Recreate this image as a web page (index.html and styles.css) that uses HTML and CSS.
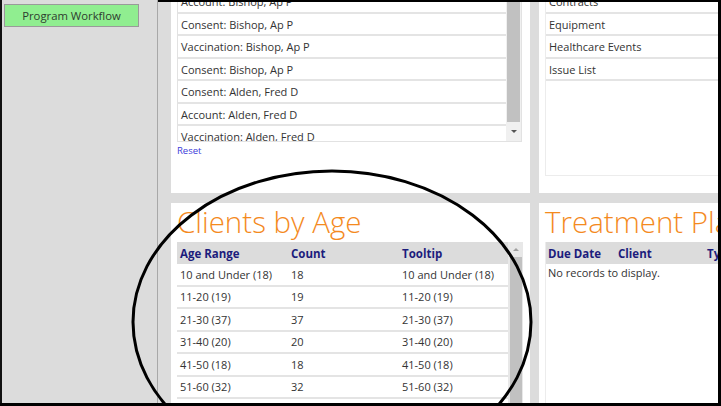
FILE: index.html
```html
<!DOCTYPE html>
<html lang="en">
<head>
<meta charset="utf-8">
<title>Dashboard</title>
<link rel="stylesheet" href="styles.css">
</head>
<body>
<div class="screen">
  <aside class="sidebar">
    <button class="btn-workflow" type="button">Program Workflow</button>
  </aside>
  <main class="main">
    <div class="dash">
      <section class="panel panel-recent">
        <div class="listbox">
          <ul class="rows">
            <li>Account: Bishop, Ap P</li>
            <li>Consent: Bishop, Ap P</li>
            <li>Vaccination: Bishop, Ap P</li>
            <li>Consent: Bishop, Ap P</li>
            <li>Consent: Alden, Fred D</li>
            <li>Account: Alden, Fred D</li>
            <li>Vaccination: Alden, Fred D</li>
          </ul>
          <div class="vscroll">
            <div class="vscroll-thumb"></div>
            <div class="vscroll-btn"><span class="tri-down"></span></div>
          </div>
        </div>
        <a class="reset" href="#">Reset</a>
      </section>

      <section class="panel panel-links">
        <ul class="rows linkbox">
          <li>Contracts</li>
          <li>Equipment</li>
          <li>Healthcare Events</li>
          <li>Issue List</li>
        </ul>
      </section>

      <section class="panel panel-age">
        <h2 class="panel-title">Clients by Age</h2>
        <div class="gridbox">
          <div class="grid-main">
            <div class="grid-head">
              <span class="c1">Age Range</span>
              <span class="c2">Count</span>
              <span class="c3">Tooltip</span>
            </div>
            <div class="grid-row"><span class="c1">10 and Under (18)</span><span class="c2">18</span><span class="c3">10 and Under (18)</span></div>
            <div class="grid-row"><span class="c1">11-20 (19)</span><span class="c2">19</span><span class="c3">11-20 (19)</span></div>
            <div class="grid-row"><span class="c1">21-30 (37)</span><span class="c2">37</span><span class="c3">21-30 (37)</span></div>
            <div class="grid-row"><span class="c1">31-40 (20)</span><span class="c2">20</span><span class="c3">31-40 (20)</span></div>
            <div class="grid-row"><span class="c1">41-50 (18)</span><span class="c2">18</span><span class="c3">41-50 (18)</span></div>
            <div class="grid-row"><span class="c1">51-60 (32)</span><span class="c2">32</span><span class="c3">51-60 (32)</span></div>
            <div class="grid-row"><span class="c1">61-70 (25)</span><span class="c2">25</span><span class="c3">61-70 (25)</span></div>
          </div>
          <div class="gscroll">
            <div class="gscroll-btn"><span class="tri-up"></span></div>
            <div class="gscroll-thumb"></div>
          </div>
        </div>
      </section>

      <section class="panel panel-plans">
        <h2 class="panel-title">Treatment Plans</h2>
        <div class="planbox">
          <div class="grid-head plan-head">
            <span class="p1">Due Date</span>
            <span class="p2">Client</span>
            <span class="p3">Type</span>
          </div>
          <div class="empty">No records to display.</div>
        </div>
      </section>
    </div>
  </main>
  <svg class="annotation" width="721" height="406" viewBox="0 0 721 406" aria-hidden="true">
    <ellipse cx="332" cy="322" rx="199" ry="151" fill="none" stroke="#000" stroke-width="3"/>
  </svg>
</div>
</body>
</html>
```

FILE: styles.css
```css
* { box-sizing: border-box; }
html, body { margin: 0; padding: 0; background: #fff; }
body { font-family: "Open Sans", "Noto Sans", sans-serif; color: #333; }

.screen {
  position: relative;
  width: 721px;
  height: 406px;
  display: flex;
  overflow: hidden;
  border-right: 3px solid #000;
  border-bottom: 3px solid #000;
  background: #dcdcdc;
}

.sidebar {
  width: 158px;
  flex: none;
  background: #dcdcdc;
  border-left: 2px solid #111;
  border-right: 1px solid #a8a8a8;
  padding: 4px 0 0 2px;
}

.btn-workflow {
  display: block;
  width: 135px;
  height: 23px;
  margin: 0;
  padding: 0;
  background: #90ee90;
  border: 1px solid #9a9a9a;
  color: #2f3b2f;
  font-family: "Open Sans", "Noto Sans", sans-serif;
  font-size: 11.3px;
  line-height: 21px;
  text-align: center;
}

.main {
  flex: 1;
  min-width: 0;
  border-top: 2px solid #000;
  padding-left: 13px;
  overflow: hidden;
  background: #dcdcdc;
}

.dash {
  margin-top: -11px;
  display: grid;
  grid-template-columns: 359px 1fr;
  grid-template-rows: 202px 260px;
  column-gap: 9px;
  row-gap: 10px;
  width: 600px;
}

.panel {
  background: #fff;
  min-width: 0;
  overflow: hidden;
}

.rows {
  list-style: none;
  margin: 0;
  padding: 0;
}
.rows li {
  height: 22.5px;
  padding-top: 2px;
  line-height: 18.5px;
  border-bottom: 2px solid #e4e4e4;
  padding-left: 3px;
  font-size: 11px;
  color: #333;
  white-space: nowrap;
}

/* recent activity list */
.panel-recent { padding: 0 8px 0 6px; }
.listbox {
  height: 151px;
  display: flex;
  border: 1px solid #e2e2e2;
  border-top: 0;
  overflow: hidden;
}
.listbox .rows { flex: 1; min-width: 0; }
.vscroll {
  width: 15px;
  flex: none;
  background: #f0f0f0;
  display: flex;
  flex-direction: column;
  padding: 0 1px 0 1px;
}
.vscroll-thumb { height: 131px; background: #c1c1c1; }
.vscroll-btn {
  flex: 1;
  display: flex;
  align-items: center;
  justify-content: center;
}
.tri-down {
  width: 0; height: 0;
  border-left: 3px solid transparent;
  border-right: 3px solid transparent;
  border-top: 3px solid #555;
}
.reset {
  display: block;
  margin-top: 3px;
  font-size: 9.5px;
  line-height: 12px;
  color: #3b3bd9;
  text-decoration: none;
}

/* links list */
.panel-links { padding-left: 6px; }
.linkbox {
  height: 185px;
  border-left: 1px solid #ececec;
  border-bottom: 1px solid #ececec;
}

/* titles */
.panel-title {
  margin: 0;
  height: 39px;
  padding: 1px 0 0 0;
  font-family: "Open Sans", "Noto Sans", sans-serif;
  font-weight: 300;
  font-size: 29.5px;
  line-height: 36px;
  color: #f48a1e;
  white-space: nowrap;
}

/* clients by age grid */
.panel-age { padding: 0 7px 0 6px; }
.gridbox { display: flex; height: 221px; }
.grid-main { flex: 1; min-width: 0; }
.grid-head {
  display: flex;
  height: 22px;
  background: #dcdcdc;
  align-items: center;
  font-size: 11.5px;
  font-weight: 700;
  color: #1c1c7c;
  white-space: nowrap;
}
.grid-row {
  display: flex;
  height: 22.5px;
  align-items: center;
  border-bottom: 2px solid #e4e4e4;
  font-size: 11px;
  color: #333;
  white-space: nowrap;
}
.c1, .c2 { width: 111px; padding-left: 3px; flex: none; }
.c3 { flex: 1; padding-left: 3px; }
.gscroll {
  width: 15px;
  flex: none;
  background: #e8e8e8;
  display: flex;
  flex-direction: column;
  padding: 0 1px 0 2px;
}
.gscroll-btn {
  height: 15px;
  display: flex;
  align-items: center;
  justify-content: center;
}
.tri-up {
  width: 0; height: 0;
  border-left: 3px solid transparent;
  border-right: 3px solid transparent;
  border-bottom: 3px solid #a0a0a0;
}
.gscroll-thumb { flex: 1; background: #c1c1c1; }

/* treatment plans */
.panel-plans { padding-left: 6px; }
.planbox { border-left: 1px solid #ececec; height: 221px; }
.plan-head { width: 600px; }
.p1 { width: 71px; padding-left: 2px; flex: none; }
.p2 { width: 90px; padding-left: 1px; flex: none; }
.p3 { flex: 1; }
.empty {
  padding: 1px 0 0 2px;
  font-size: 11px;
  line-height: 16px;
  color: #333;
}

.annotation {
  position: absolute;
  left: 0;
  top: 0;
  pointer-events: none;
}
```
